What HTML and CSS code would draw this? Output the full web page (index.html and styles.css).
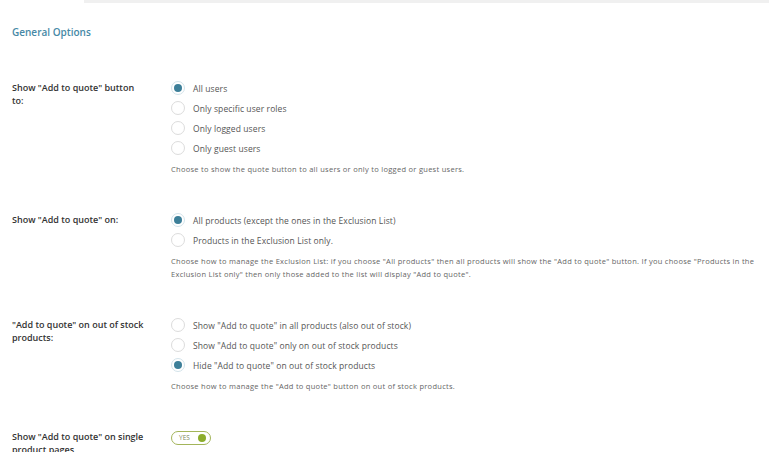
FILE: index.html
```html
<!DOCTYPE html>
<html>
<head>
<meta charset="utf-8">
<link rel="stylesheet" href="styles.css">
</head>
<body>
<div class="topbar"></div>
<h2 class="title">General Options</h2>

<div class="field">
  <div class="label">Show "Add to quote" button<br>to:</div>
  <div class="control">
    <ul class="radios">
      <li><span class="radio on"></span>All users</li>
      <li><span class="radio"></span>Only specific user roles</li>
      <li><span class="radio"></span>Only logged users</li>
      <li><span class="radio"></span>Only guest users</li>
    </ul>
    <p class="desc">Choose to show the quote button to all users or only to logged or guest users.</p>
  </div>
</div>

<div class="field">
  <div class="label">Show "Add to quote" on:</div>
  <div class="control">
    <ul class="radios">
      <li><span class="radio on"></span>All products (except the ones in the Exclusion List)</li>
      <li><span class="radio"></span>Products in the Exclusion List only.</li>
    </ul>
    <p class="desc">Choose how to manage the Exclusion List: if you choose "All products" then all products will show the "Add to quote" button. If you choose "Products in the Exclusion List only" then only those added to the list will display "Add to quote".</p>
  </div>
</div>

<div class="field">
  <div class="label">"Add to quote" on out of stock products:</div>
  <div class="control">
    <ul class="radios">
      <li><span class="radio"></span>Show "Add to quote" in all products (also out of stock)</li>
      <li><span class="radio"></span>Show "Add to quote" only on out of stock products</li>
      <li><span class="radio on"></span>Hide "Add to quote" on out of stock products</li>
    </ul>
    <p class="desc">Choose how to manage the "Add to quote" button on out of stock products.</p>
  </div>
</div>

<div class="field">
  <div class="label">Show "Add to quote" on single product pages</div>
  <div class="control">
    <div class="toggle"><span class="toggle-text">YES</span><span class="toggle-dot"></span></div>
  </div>
</div>
</body>
</html>
```

FILE: styles.css
```css
html, body {
  margin: 0;
  padding: 0;
  background: #ffffff;
  font-family: "Open Sans", "Noto Sans", sans-serif;
  overflow: hidden;
}

.topbar {
  margin-left: 84px;
  height: 3px;
  background: #f0f0f0;
}

.title {
  margin: 22px 0 39px 12px;
  font-size: 10px;
  line-height: 14px;
  font-weight: 600;
  color: #4689a6;
}

.field {
  display: grid;
  grid-template-columns: 171px 1fr;
  margin-bottom: 34.5px;
}

.label {
  padding: 4px 0 0 12px;
  width: 136px;
  font-size: 9px;
  line-height: 12.5px;
  font-weight: 600;
  color: #333333;
}

.control {
  padding-right: 12px;
}

.radios {
  list-style: none;
  margin: 0;
  padding: 0;
}

.radios li {
  display: flex;
  align-items: center;
  height: 20px;
  font-size: 8.5px;
  letter-spacing: 0.1px;
  color: #555555;
}

.radio {
  box-sizing: border-box;
  width: 14px;
  height: 14px;
  border-radius: 50%;
  border: 1px solid #dcdcdc;
  background: #ffffff;
  margin-right: 8px;
  flex: none;
  position: relative;
}

.radio.on {
  border-color: #d3e3ea;
}

.radio.on::after {
  content: "";
  position: absolute;
  left: 2px;
  top: 2px;
  width: 8px;
  height: 8px;
  border-radius: 50%;
  background: #3d7f99;
}

.desc {
  margin: 4.5px 0 0 0;
  font-size: 7.5px;
  letter-spacing: 0.28px;
  line-height: 13px;
  color: #666666;
}

.toggle {
  box-sizing: border-box;
  margin-top: 4px;
  width: 40px;
  height: 14px;
  border: 1px solid #a3b55a;
  border-radius: 7px;
  display: flex;
  align-items: center;
  padding: 0 4px 0 7px;
  justify-content: space-between;
}

.toggle-text {
  font-size: 6.5px;
  line-height: 12px;
  color: #7d8a5a;
}

.toggle-dot {
  width: 8px;
  height: 8px;
  border-radius: 50%;
  background: #8cad2c;
}
```
